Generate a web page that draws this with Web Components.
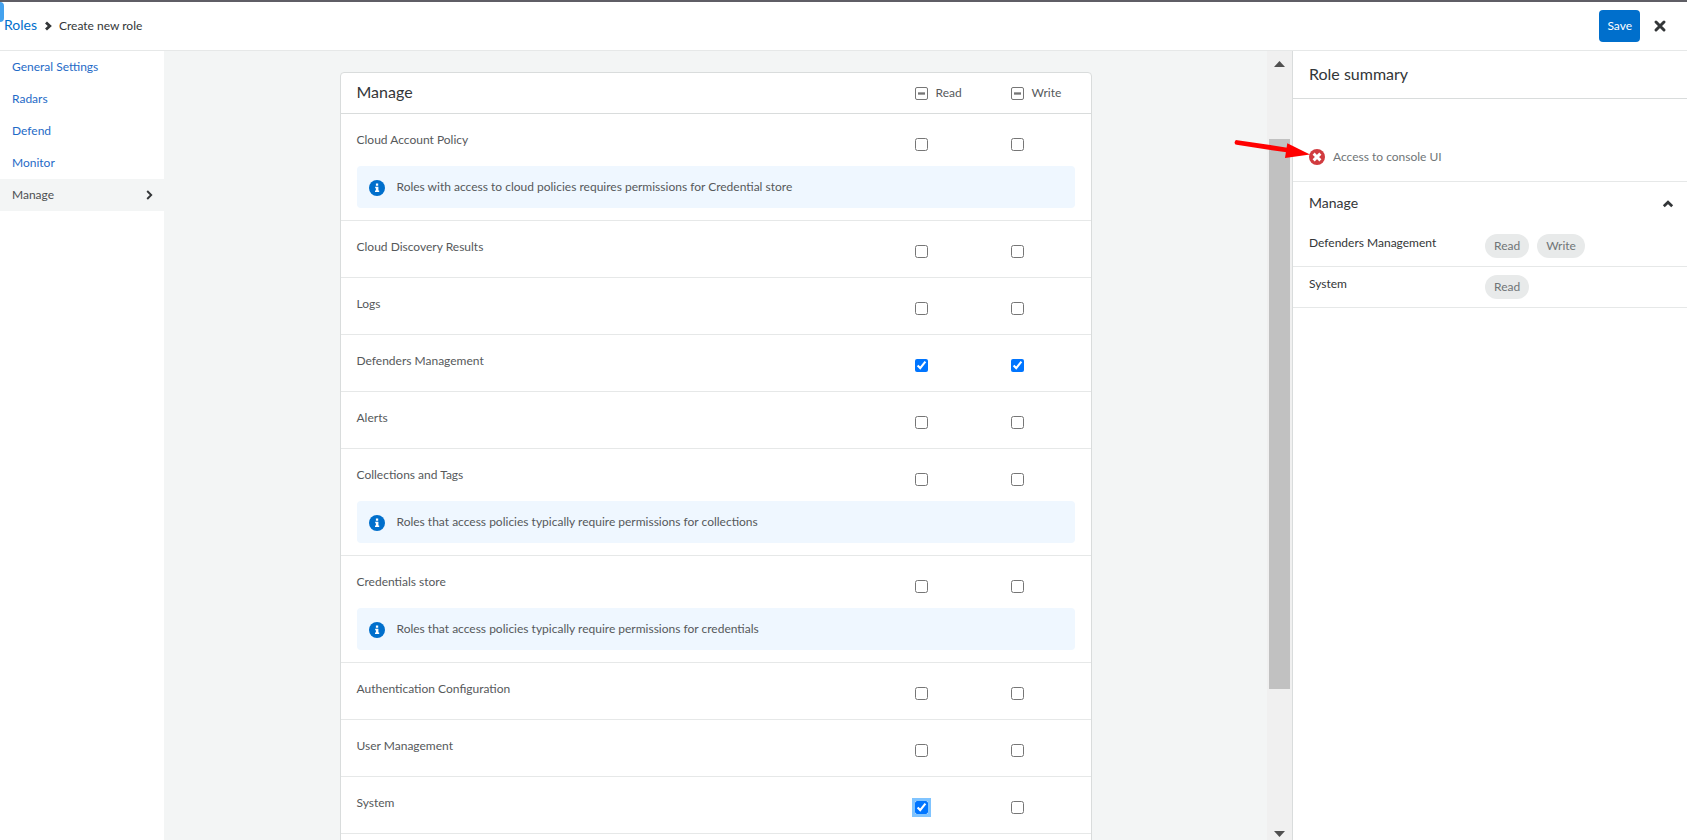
<!DOCTYPE html>
<html lang="en">
<head>
<meta charset="utf-8">
<title>Create new role</title>
<style>
html, body { margin: 0; height: 100%; }
body { font: 12px/16px Lato, "Liberation Sans", sans-serif; color: #56595b; background: #fff; }
</style>
</head>
<body>
<role-editor></role-editor>
<script>
const define = (name, html, setup) => {
  const template = document.createElement('template');
  template.innerHTML = html;
  customElements.define(name, class extends HTMLElement {
    connectedCallback() {
      if (this.shadowRoot) return;
      this.attachShadow({ mode: 'open' }).append(template.content.cloneNode(true));
      if (setup) setup(this, this.shadowRoot);
    }
  });
};

const ICONS = {
  'chevron-right': '<path d="M6.200 4 10.200 8 6.200 12" fill="none" stroke="currentColor" stroke-width="1.900"/>',
  'chevron-bold': '<path d="M6 4.400 9.800 8 6 11.600" fill="none" stroke="currentColor" stroke-width="2.800"/>',
  'chevron-up': '<path d="M3.800 11.200 8 7.200 12.200 11.200" fill="none" stroke="currentColor" stroke-width="2.700"/>',
  'close': '<path d="M4 4 12 12M12 4 4 12" fill="none" stroke="currentColor" stroke-width="3" stroke-linecap="round"/>',
  'info': '<circle cx="8" cy="8" r="8" fill="#006fcc"/><path d="M6.900 3.600h2.300v2.100H6.900zM6.200 6.800h3.200v3.800h.8v1.500H6v-1.500h.9V8.300h-.7z" fill="#fff"/>',
  'error': '<circle cx="8" cy="8" r="8" fill="#d13b3f"/><path d="M5.700 5.700 10.300 10.300M10.300 5.700 5.700 10.300" fill="none" stroke="#fff" stroke-width="3" stroke-linecap="square"/>',
};

define('ui-icon', `<style>
  :host { display: block; flex: none; width: 16px; height: 16px; }
  svg { display: block; width: 100%; height: 100%; }
</style><svg viewBox="0 0 16 16" aria-hidden="true"></svg>`, (host, root) => {
  root.querySelector('svg').innerHTML = ICONS[host.getAttribute('name')];
});

define('info-alert', `<style>
  :host { display: flex; align-items: flex-end; gap: 12px; padding: 12px; border-radius: 4px; background: #eff7ff; }
  span { line-height: 18px; }
</style><ui-icon name="info"></ui-icon><span><slot></slot></span>`);

define('permission-pill', `<style>
  :host { display: block; padding: 4px 9px; border-radius: 12px; background: #e8eaea; color: #707577; line-height: 16px; }
</style><slot></slot>`);

define('page-header', `<style>
  :host { display: block; border-top: 2px solid #5f5e65; border-bottom: 1px solid #e6e8e8; position: relative; }
  header { display: flex; align-items: center; justify-content: space-between; height: 48px; padding: 0 19px 0 4px; }
  nav, .actions { display: flex; align-items: center; }
  a { padding-bottom: 2px; color: #006fcc; font-size: 14px; text-decoration: none; }
  nav { gap: 3px; color: #333638; }
  .actions { gap: 12px; }
  button { font: inherit; border: 0; cursor: pointer; }
  .save { height: 32px; padding: 0 8px; border-radius: 4px; background: #006fcc; color: #fff; }
  .close { padding: 0; background: none; color: #333638; }
  .tab { position: absolute; left: 0; top: 0; width: 4px; height: 20px; border-radius: 0 4px 4px 0; background: #44a2ee; }
</style>
<span class="tab"></span>
<header>
  <nav aria-label="Breadcrumb"><a href="#roles">Roles</a><ui-icon name="chevron-bold"></ui-icon><span>Create new role</span></nav>
  <div class="actions"><button class="save" type="button">Save</button><button class="close" type="button" aria-label="Close"><ui-icon name="close"></ui-icon></button></div>
</header>`);

define('side-nav', `<style>
  :host { display: block; width: 164px; flex: none; }
  a { display: flex; align-items: center; justify-content: space-between; height: 32px; padding: 0 7px 0 12px; color: #1f6bc7; text-decoration: none; }
  a[aria-current] { background: #f3f5f5; color: #4d5052; }
  ui-icon { color: #333638; }
</style>
<nav aria-label="Sections">
  <a href="#general">General Settings</a>
  <a href="#radars">Radars</a>
  <a href="#defend">Defend</a>
  <a href="#monitor">Monitor</a>
  <a href="#manage" aria-current="page">Manage<ui-icon name="chevron-right"></ui-icon></a>
</nav>`);

define('permission-table', `<style>
  :host { display: block; box-sizing: border-box; width: 100%; max-width: 752px; padding-bottom: 24px; border: 1px solid #d9dcdc; border-radius: 4px; background: #fff; }
  table { width: 100%; table-layout: fixed; border-spacing: 0; text-align: left; }
  col.read { width: 96px; }
  col.write { width: 80px; }
  th, td { padding: 0; font-weight: 400; }
  thead th { height: 40px; border-bottom: 1px solid #d9dcdc; }
  thead th:first-child { box-sizing: border-box; height: 41px; padding: 0 0 2px 16px; font-size: 16px; color: #333638; }
  thead label { display: flex; align-items: center; gap: 8px; }
  tbody th, tbody td { box-sizing: border-box; height: 57px; border-bottom: 1px solid #e6e8e8; vertical-align: top; }
  tbody th { padding: 12px 0 0 16px; line-height: 28px; }
  tbody td { padding-top: 24px; }
  tr.noted > * { height: 52px; border-bottom: 0; }
  tr.note td { height: auto; padding: 0 16px 12px; }
  input { display: block; width: 13px; height: 13px; margin: 0; }
  input.some { appearance: none; box-sizing: border-box; border: 1px solid #767676; border-radius: 2px; background: linear-gradient(#a4a4a4 1px, #767676 1px 2px, #a4a4a4 2px) center / 7px 3px no-repeat #fff; }
  input.active { outline: 3px solid #80c4ff; outline-offset: 0; }
</style>
<table>
  <colgroup><col><col class="read"><col class="write"></colgroup>
  <thead><tr>
    <th scope="col">Manage</th>
    <th scope="col"><label><input class="some" type="checkbox">Read</label></th>
    <th scope="col"><label><input class="some" type="checkbox">Write</label></th>
  </tr></thead>
  <tbody></tbody>
</table>`, (host, root) => {
  root.querySelectorAll('.some').forEach(box => { box.indeterminate = true; });
  const rows = [
    ['Cloud Account Policy', '', 'Roles with access to cloud policies requires permissions for Credential store'],
    ['Cloud Discovery Results', ''],
    ['Logs', ''],
    ['Defenders Management', 'rw'],
    ['Alerts', ''],
    ['Collections and Tags', '', 'Roles that access policies typically require permissions for collections'],
    ['Credentials store', '', 'Roles that access policies typically require permissions for credentials'],
    ['Authentication Configuration', ''],
    ['User Management', ''],
    ['System', 'r', '', 'r'],
  ];
  const box = (name, label, granted, active) =>
    `<td><input type="checkbox" aria-label="${name}: ${label}"${granted ? ' checked' : ''}${active ? ' class="active"' : ''}></td>`;
  root.querySelector('tbody').innerHTML = rows.map(([name, granted, note, active]) =>
    `<tr${note ? ' class="noted"' : ''}><th scope="row">${name}</th>` +
    box(name, 'Read', granted.includes('r'), active === 'r') + box(name, 'Write', granted.includes('w')) + '</tr>' +
    (note ? `<tr class="note"><td colspan="3"><info-alert>${note}</info-alert></td></tr>` : '')).join('');
});

define('scroll-track', `<style>
  :host { display: flex; flex-direction: column; flex: none; width: 25px; background: #f0f0f0; }
  i { display: block; width: 11px; height: 6px; margin: 10px auto 6px 7px; background: #505050; clip-path: polygon(50% 0, 100% 100%, 0 100%); }
  i.down { margin: 13px auto 3px 7px; clip-path: polygon(0 0, 100% 0, 50% 100%); }
  .before { flex: 66; }
  .thumb { flex: 550; margin: 0 2px; background: #c1c1c1; }
  .after { flex: 129; }
</style><i></i><span class="before"></span><span class="thumb"></span><span class="after"></span><i class="down"></i>`);

define('summary-row', `<style>
  :host { display: flex; align-items: flex-start; padding: 8px 16px; border-bottom: 1px solid #e6e8e8; color: #333638; }
  .name { width: 176px; line-height: 18px; }
  .pills { display: flex; gap: 8px; }
</style><span class="name"><slot name="name"></slot></span><div class="pills"><slot></slot></div>`);

define('role-summary', `<style>
  :host { display: block; box-sizing: border-box; width: 395px; flex: none; border-left: 1px solid #d9dcdc; color: #333638; position: relative; }
  h2, h3 { margin: 0; font-weight: 400; }
  h2 { padding: 0 16px 2px; border-bottom: 1px solid #d9dcdc; font-size: 16px; line-height: 45px; }
  .access { display: flex; gap: 8px; padding: 50px 16px 16px; border-bottom: 1px solid #e6e8e8; color: #707577; }
  .group { display: flex; align-items: center; justify-content: space-between; width: 100%; height: 44px; padding: 0 11px 2px 16px; border: 0; background: none; color: inherit; font: inherit; font-size: 14px; }
  .pointer { position: absolute; left: -60px; top: 86px; width: 80px; height: 24px; }
</style>
<h2>Role summary</h2>
<div class="access"><ui-icon name="error"></ui-icon><span>Access to console UI</span></div>
<h3><button class="group" type="button" aria-expanded="true">Manage<ui-icon name="chevron-up"></ui-icon></button></h3>
<summary-row><span slot="name">Defenders Management</span><permission-pill>Read</permission-pill><permission-pill>Write</permission-pill></summary-row>
<summary-row><span slot="name">System</span><permission-pill>Read</permission-pill></summary-row>
<svg class="pointer" viewBox="0 0 80 24" aria-hidden="true"><path d="M4 5.500 54 13" stroke="#f00" stroke-width="4.800" stroke-linecap="round"/><path d="M54.300 6.300 77 17.500 52 21z" fill="#f00"/></svg>`);

define('role-editor', `<style>
  :host { display: flex; flex-direction: column; height: 100vh; overflow: hidden; }
  .body { display: flex; flex: 1; min-height: 0; }
  main { display: flex; flex: 1; min-width: 0; align-items: flex-start; justify-content: center; padding: 21px 16px 0; background: #f3f5f5; overflow: hidden; }
</style>
<page-header></page-header>
<div class="body"><side-nav></side-nav><main><permission-table></permission-table></main><scroll-track></scroll-track><role-summary></role-summary></div>`);
</script>
</body>
</html>
